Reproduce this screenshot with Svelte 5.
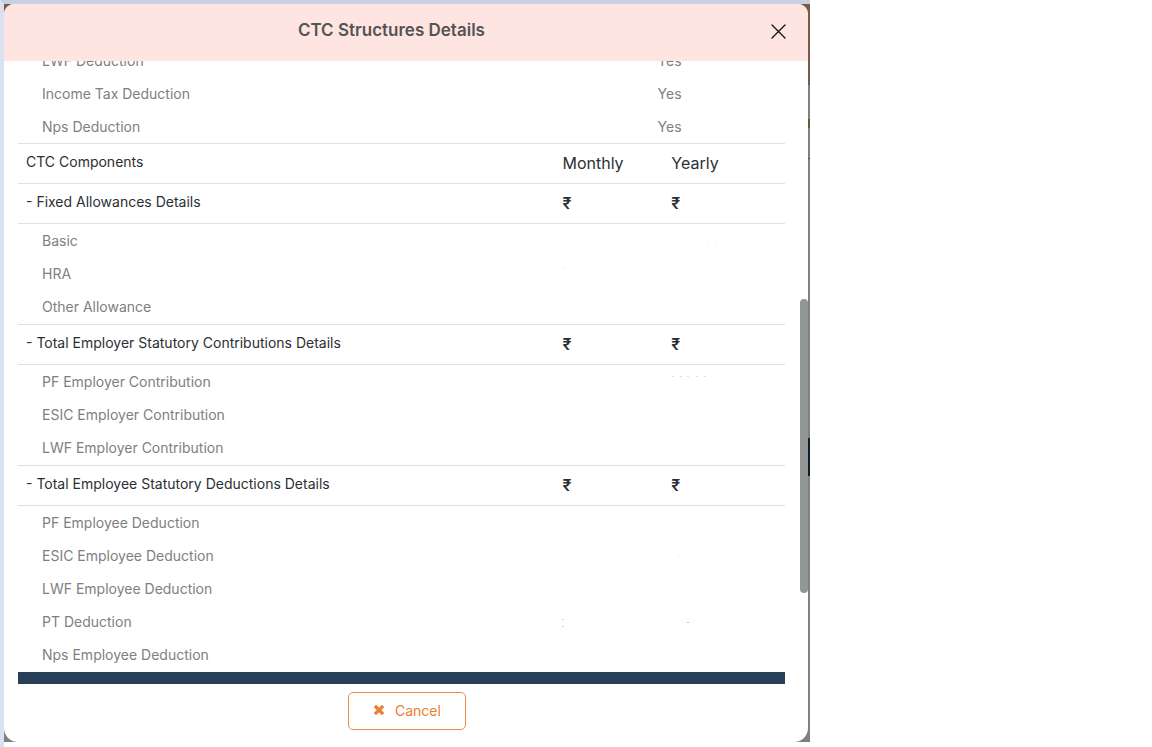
<script>
  const deductions = [
    { name: 'LWF Deduction', value: 'Yes' },
    { name: 'Income Tax Deduction', value: 'Yes' },
    { name: 'Nps Deduction', value: 'Yes' }
  ];

  const groups = [
    {
      title: 'Fixed Allowances Details',
      rows: [
        { name: 'Basic', yearly: { tone: '#f1f1f1', dots: [[10, 21], [27, 21], [36, 21], [44, 21]] } },
        { name: 'HRA', monthly: { tone: '#ededed', dots: [[0, 9]] } },
        { name: 'Other Allowance' }
      ]
    },
    {
      title: 'Total Employer Statutory Contributions Details',
      rows: [
        { name: 'PF Employer Contribution', yearly: { tone: '#dedede', dots: [[1, 10], [9, 10], [16, 10], [25, 10], [33, 10]] } },
        { name: 'ESIC Employer Contribution' },
        { name: 'LWF Employer Contribution' }
      ]
    },
    {
      title: 'Total Employee Statutory Deductions Details',
      rows: [
        { name: 'PF Employee Deduction', monthly: { tone: '#f3f3f3', dots: [[8, 20], [16, 20], [25, 20]] } },
        { name: 'ESIC Employee Deduction', yearly: { tone: '#f0f0f0', dots: [[7, 15]] } },
        { name: 'LWF Employee Deduction' },
        {
          name: 'PT Deduction',
          monthly: { tone: '#d2d2d2', dots: [[0, 13], [0, 20]] },
          yearly: { tone: '#b8b8b8', dots: [[16, 16]] }
        },
        { name: 'Nps Employee Deduction' }
      ]
    }
  ];
</script>

{#snippet marks(cell)}
  {#if cell}
    <svg class="marks" width="60" height="32" aria-hidden="true">
      {#each cell.dots as [x, y]}
        <rect {x} {y} width="2" height="1" fill={cell.tone} />
      {/each}
    </svg>
  {/if}
{/snippet}

<div class="page">
  <div class="backdrop">
    <section class="modal" role="dialog" aria-labelledby="dialog-title">
      <header>
        <h1 id="dialog-title">CTC Structures Details</h1>
        <button class="close" aria-label="Close">
          <svg width="15" height="15" viewBox="0 0 15 15" aria-hidden="true">
            <path d="M1 1 14 14M14 1 1 14" fill="none" stroke="#161616" stroke-width="1.4" stroke-linecap="round" />
          </svg>
        </button>
      </header>

      <div class="body">
        <div class="content">
          <table>
            <colgroup><col class="wide" /><col /></colgroup>
            <tbody>
              {#each deductions as row}
                <tr class="item"><th scope="row">{row.name}</th><td>{row.value}</td></tr>
              {/each}
            </tbody>
          </table>
          <table>
            <colgroup><col class="name" /><col class="month" /><col /></colgroup>
            <thead>
              <tr class="columns">
                <th scope="col">CTC Components</th>
                <th scope="col" class="period">Monthly</th>
                <th scope="col" class="period">Yearly</th>
              </tr>
            </thead>
            {#each groups as group}
              <tbody class="section">
                <tr class="group">
                  <th scope="rowgroup">- {group.title}</th>
                  <td>₹</td>
                  <td>₹</td>
                </tr>
                {#each group.rows as row}
                  <tr class="item">
                    <th scope="row">{row.name}</th>
                    <td>{@render marks(row.monthly)}</td>
                    <td>{@render marks(row.yearly)}</td>
                  </tr>
                {/each}
              </tbody>
            {/each}
          </table>
          <div class="total"></div>
        </div>
        <div class="thumb"></div>
      </div>

      <footer>
        <button class="cancel">
          <svg width="12" height="12" viewBox="0 0 12 12" aria-hidden="true">
            <path d="M3 3 9 9M9 3 3 9" fill="none" stroke="currentColor" stroke-width="3.2" stroke-linecap="square" stroke-linejoin="round" />
          </svg>
          Cancel
        </button>
      </footer>
    </section>
    <div class="edge"></div>
  </div>
</div>

<style>
  :global(body) {
    background: #fff;
  }

  .page {
    box-sizing: border-box;
    width: 70.3vw;
    height: 100vh;
    padding-bottom: 5px;
    border-left: 4px solid #d9e2f1;
    border-top: 4px solid #c8d1e3;
    font-family: Inter, sans-serif;
    font-size: 14px;
    color: #2b2f33;
  }

  .backdrop {
    display: flex;
    height: 100%;
    background: linear-gradient(#7c5a48 81px, #808080 81px);
  }

  .edge {
    width: 2px;
    background: linear-gradient(
      #7c5a48 81px, #808080 81px 115px, #66593a 115px 124px, #808080 124px 154px,
      #555 154px 155px, #808080 155px 434px, #101e2c 434px 472px, #808080 472px
    );
  }

  .modal {
    flex: 1;
    display: flex;
    flex-direction: column;
    overflow: hidden;
    border-radius: 10px 10px 14px 14px;
    background: #fff;
  }

  header {
    display: flex;
    align-items: center;
    height: 55px;
    padding: 0 22px 2px 8px;
    background: #ffe5e2;
  }

  h1 {
    flex: 1;
    margin: 0;
    padding-bottom: 4px;
    text-align: center;
    font-size: 17px;
    line-height: 24px;
    font-weight: 600;
    color: #545454;
  }

  button {
    font-family: inherit;
    background: none;
    cursor: pointer;
  }

  .close {
    display: flex;
    padding: 0;
    border: 0;
  }

  .body {
    position: relative;
    flex: 1;
    min-height: 0;
    overflow: hidden;
  }

  .content {
    margin: -17px 23px 0 14px;
  }

  table {
    width: 100%;
    table-layout: fixed;
    border-collapse: separate;
    border-spacing: 0;
  }

  .wide {
    width: 83.4%;
  }

  .name {
    width: 71%;
  }

  .month {
    width: 14.2%;
  }

  th,
  td {
    box-sizing: border-box;
    padding: 0;
    text-align: left;
    vertical-align: middle;
    font-size: 14px;
    line-height: 20px;
    font-weight: 400;
  }

  .item th,
  .item td {
    height: 33px;
    color: #808080;
  }

  .item th {
    padding-left: 24px;
  }

  .section .item:last-child th,
  .section .item:last-child td {
    height: 34px;
  }

  .columns th {
    height: 40px;
    padding-bottom: 4px;
    border-top: 1px solid #dee0e2;
  }

  .columns th:first-child,
  .group th {
    padding-left: 8px;
  }

  .columns .period {
    padding-bottom: 2px;
    font-size: 16px;
  }

  .group th,
  .group td {
    height: 41px;
    border-top: 1px solid #dee0e2;
    border-bottom: 1px solid #dee0e2;
  }

  .group th {
    padding-bottom: 4px;
  }

  .group td {
    padding-bottom: 2px;
    font-size: 16px;
    font-weight: 600;
  }

  .marks {
    display: block;
  }

  .total {
    height: 40px;
    background: #284059;
  }

  .thumb {
    position: absolute;
    top: 238px;
    right: 0;
    width: 8px;
    height: 294px;
    border-radius: 4px;
    background: #929796;
  }

  footer {
    display: flex;
    justify-content: center;
    padding: 8px 0 12px 2px;
  }

  .cancel {
    display: flex;
    align-items: center;
    justify-content: center;
    gap: 10px;
    height: 38px;
    padding: 0 24px 2px;
    border: 1px solid #ee8a4e;
    border-radius: 5px;
    font-size: 14px;
    color: #ed7d31;
  }
</style>
